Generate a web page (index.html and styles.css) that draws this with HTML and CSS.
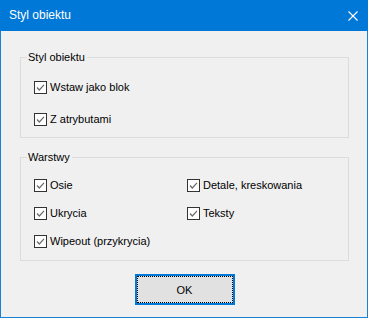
FILE: index.html
```html
<!DOCTYPE html>
<html lang="pl">
<head>
    <meta charset="UTF-8">
    <title>Styl obiektu</title>
    <link rel="stylesheet" href="styles.css">
</head>
<body>
    <div class="window">
        <div class="titlebar">
            <span class="title">Styl obiektu</span>
            <svg class="close" width="10" height="10" viewBox="0 0 10 10">
                <path d="M0.5 0.5 L9.5 9.5 M9.5 0.5 L0.5 9.5" stroke="#fff" stroke-width="1.1" fill="none"/>
            </svg>
        </div>

        <div class="content">
            <!-- Styl obiektu -->
            <fieldset class="group group-style">
                <legend>Styl obiektu</legend>
                <div class="checks checks-one">
                    <label class="check"><span class="box"><svg width="11" height="11" viewBox="0 0 11 11"><path d="M2 5.5 L4.3 8 L9 2.8" stroke="#6a6a6a" stroke-width="1.2" fill="none"/></svg></span>Wstaw jako blok</label>
                    <label class="check"><span class="box"><svg width="11" height="11" viewBox="0 0 11 11"><path d="M2 5.5 L4.3 8 L9 2.8" stroke="#6a6a6a" stroke-width="1.2" fill="none"/></svg></span>Z atrybutami</label>
                </div>
            </fieldset>

            <!-- Warstwy -->
            <fieldset class="group group-layers">
                <legend>Warstwy</legend>
                <div class="checks checks-two">
                    <label class="check"><span class="box"><svg width="11" height="11" viewBox="0 0 11 11"><path d="M2 5.5 L4.3 8 L9 2.8" stroke="#6a6a6a" stroke-width="1.2" fill="none"/></svg></span>Osie</label>
                    <label class="check"><span class="box"><svg width="11" height="11" viewBox="0 0 11 11"><path d="M2 5.5 L4.3 8 L9 2.8" stroke="#6a6a6a" stroke-width="1.2" fill="none"/></svg></span>Detale, kreskowania</label>
                    <label class="check"><span class="box"><svg width="11" height="11" viewBox="0 0 11 11"><path d="M2 5.5 L4.3 8 L9 2.8" stroke="#6a6a6a" stroke-width="1.2" fill="none"/></svg></span>Ukrycia</label>
                    <label class="check"><span class="box"><svg width="11" height="11" viewBox="0 0 11 11"><path d="M2 5.5 L4.3 8 L9 2.8" stroke="#6a6a6a" stroke-width="1.2" fill="none"/></svg></span>Teksty</label>
                    <label class="check"><span class="box"><svg width="11" height="11" viewBox="0 0 11 11"><path d="M2 5.5 L4.3 8 L9 2.8" stroke="#6a6a6a" stroke-width="1.2" fill="none"/></svg></span>Wipeout (przykrycia)</label>
                </div>
            </fieldset>

            <div class="actions">
                <button class="ok-btn">OK</button>
            </div>
        </div>
    </div>
</body>
</html>
```

FILE: styles.css
```css
* {
    margin: 0;
    padding: 0;
    box-sizing: border-box;
}

body {
    font-family: "Liberation Sans", Arial, sans-serif;
    font-size: 11px;
    color: #000;
    background: #f0f0f0;
}

.window {
    width: 368px;
    height: 318px;
    border: 1px solid #1a7fd6;
    border-top: none;
    background: #f0f0f0;
    display: flex;
    flex-direction: column;
}

.titlebar {
    height: 31px;
    margin: 0 -1px;
    background: #0078d7;
    color: #fff;
    display: flex;
    align-items: center;
    justify-content: space-between;
    padding: 0 10px 1px 9px;
}

.title {
    font-size: 12px;
    line-height: 16px;
}

.close {
    display: block;
    margin-top: 1px;
}

.content {
    padding: 20px 18px 0 19px;
    display: flex;
    flex-direction: column;
}

.group {
    border: 1px solid #dcdcdc;
    min-width: 0;
    padding-left: 6px;
}

.group legend {
    padding: 0 2px 0 1px;
    line-height: 13px;
}

.group-style {
    padding-top: 17px;
    padding-bottom: 11px;
}

.group-layers {
    margin-top: 13px;
    padding-top: 15px;
    padding-bottom: 12px;
}

.checks {
    display: grid;
    padding-left: 7px;
}

.checks-one {
    row-gap: 19px;
}

.checks-two {
    grid-template-columns: 153px 1fr;
    row-gap: 15px;
}

.check {
    display: flex;
    align-items: center;
    gap: 3px;
    height: 13px;
    line-height: 13px;
    white-space: nowrap;
}

.box {
    width: 13px;
    height: 13px;
    border: 1px solid #333;
    background: #fff;
    flex: none;
    display: flex;
    align-items: center;
    justify-content: center;
}

.box svg {
    display: block;
}

.actions {
    display: flex;
    justify-content: center;
    margin-top: 13px;
}

.ok-btn {
    width: 100px;
    height: 31px;
    background: #e1e1e1;
    border: 2px solid #0078d7;
    outline: 1px dotted #000;
    outline-offset: -3px;
    font-family: "Liberation Sans", Arial, sans-serif;
    font-size: 11px;
    color: #000;
}
```
